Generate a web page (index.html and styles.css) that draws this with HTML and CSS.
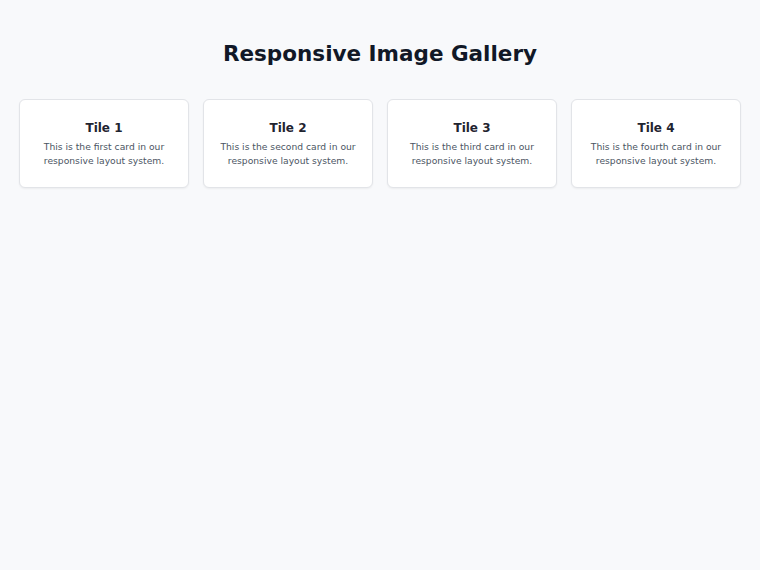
FILE: index.html
```html
<!DOCTYPE html>
<html>
<head>
<meta charset="utf-8">
<link rel="stylesheet" href="styles.css">
</head>
<body>
<h1 class="title">Responsive Image Gallery</h1>
<div class="grid">
  <div class="card"><h2 class="card-title">Tile 1</h2><p class="card-text">This is the first card in our responsive layout system.</p></div>
  <div class="card"><h2 class="card-title">Tile 2</h2><p class="card-text">This is the second card in our responsive layout system.</p></div>
  <div class="card"><h2 class="card-title">Tile 3</h2><p class="card-text">This is the third card in our responsive layout system.</p></div>
  <div class="card"><h2 class="card-title">Tile 4</h2><p class="card-text">This is the fourth card in our responsive layout system.</p></div>
</div>
</body>
</html>
```
FILE: styles.css
```css
html, body {
  margin: 0;
  background: #f8f9fb;
  font-family: "DejaVu Sans", sans-serif;
}
body {
  padding: 40px 19px;
}
.title {
  margin: 0 0 31px;
  text-align: center;
  font-size: 21.5px;
  font-weight: bold;
  color: #111827;
  line-height: 28px;
}
.grid {
  display: grid;
  grid-template-columns: repeat(4, 1fr);
  gap: 14px;
}
.card {
  background: #fff;
  border: 1px solid #e2e4e8;
  border-radius: 6px;
  box-shadow: 0 1px 2px rgba(0,0,0,0.05);
  padding: 20px 14px 19px;
  text-align: center;
}
.card-title {
  margin: 0 0 4px;
  font-size: 12px;
  font-weight: bold;
  color: #1f2430;
  line-height: 16px;
}
.card-text {
  margin: 0;
  font-size: 9.2px;
  line-height: 14px;
  color: #4b5563;
}
```
